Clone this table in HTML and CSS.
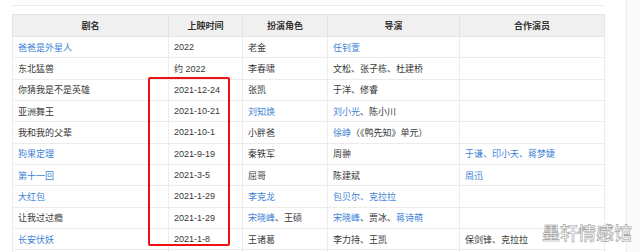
FILE: index.html
```html
<!DOCTYPE html>
<html lang="zh">
<head>
<meta charset="utf-8">
<link rel="stylesheet" href="styles.css">
</head>
<body>
<div class="page">
  <div class="main">
    <div class="rule"></div>
    <table class="films">
      <colgroup>
        <col class="c1"><col class="c2"><col class="c3"><col class="c4"><col class="c5">
      </colgroup>
      <thead>
        <tr><th>剧名</th><th>上映时间</th><th>扮演角色</th><th>导演</th><th>合作演员</th></tr>
      </thead>
      <tbody>
        <tr><td><a>爸爸是外星人</a></td><td>2022</td><td>老金</td><td><a>任钊萱</a></td><td></td></tr>
        <tr><td>东北猛兽</td><td>约 2022</td><td>李春啸</td><td>文松、张子栋、杜建桥</td><td></td></tr>
        <tr><td>你猜我是不是英雄</td><td>2021-12-24</td><td>张凯</td><td>于洋、修睿</td><td></td></tr>
        <tr><td>亚洲舞王</td><td>2021-10-21</td><td><a>刘知焕</a></td><td><a>刘小光</a>、陈小川</td><td></td></tr>
        <tr><td>我和我的父辈</td><td>2021-10-1</td><td>小胖爸</td><td><a>徐峥</a>（《鸭先知》单元）</td><td></td></tr>
        <tr><td><a>狗果定理</a></td><td>2021-9-19</td><td>秦铁军</td><td>周翀</td><td><a>于谦、印小天、蒋梦婕</a></td></tr>
        <tr><td><a>第十一回</a></td><td>2021-3-5</td><td>屈哥</td><td>陈建斌</td><td><a>周迅</a></td></tr>
        <tr><td><a>大红包</a></td><td>2021-1-29</td><td><a>李克龙</a></td><td><a>包贝尔、克拉拉</a></td><td></td></tr>
        <tr><td>让我过过瘾</td><td>2021-1-29</td><td><a>宋晓峰</a>、王硕</td><td><a>宋晓峰</a>、贾冰、<a>蒋诗萌</a></td><td></td></tr>
        <tr><td><a>长安伏妖</a></td><td>2021-1-8</td><td>王诸葛</td><td>李力持、王凯</td><td>保剑锋、克拉拉</td></tr>
        <tr><td>&nbsp;</td><td></td><td></td><td></td><td></td></tr>
      </tbody>
    </table>
    <div class="highlight"></div>
    <div class="watermark">墨轩情感馆</div>
  </div>
  <div class="side"></div>
</div>
</body>
</html>
```
FILE: styles.css
```css
html, body {
  margin: 0;
  padding: 0;
  background: #ffffff;
}
body {
  font-family: "Liberation Sans", "Noto Sans CJK SC", sans-serif;
  color: #383838;
  overflow: hidden;
  height: 252px;
}
.page {
  display: flex;
  height: 252px;
}
.main {
  position: relative;
  width: 626px;
  padding: 5px 0 0 12px;
  box-sizing: border-box;
}
.side {
  flex: 1;
  border-left: 1px solid #ececec;
  background: #fafafa;
}
.rule {
  width: 592px;
  height: 1px;
  background: #ececec;
  margin-bottom: 8px;
}
.films {
  border-collapse: collapse;
  table-layout: fixed;
  width: 592px;
  font-size: 9px;
  border: 1px solid #e6e6e6;
}
.c1 { width: 156px; }
.c2 { width: 74px; }
.c3 { width: 85px; }
.c4 { width: 132px; }
.c5 { width: 145px; }
.films th {
  background: #f0f0f0;
  font-weight: bold;
  color: #333333;
  text-align: center;
  height: 21px;
  padding: 0;
  border: 1px solid #e4e4e4;
}
.films td {
  height: 20.33px;
  padding: 0 0 0 5px;
  border: 1px solid #ececec;
  white-space: nowrap;
  overflow: hidden;
  vertical-align: middle;
}
.films a {
  color: #3d7fd6;
  text-decoration: none;
}
.highlight {
  position: absolute;
  left: 148px;
  top: 77px;
  width: 82px;
  height: 169px;
  box-sizing: border-box;
  border: 2px solid #ee1111;
  border-radius: 2px;
}
.watermark {
  position: absolute;
  left: 542px;
  top: 219px;
  font-size: 18px;
  font-weight: 500;
  font-family: "Noto Sans CJK SC", sans-serif;
  color: #ffffff;
  -webkit-text-stroke: 0.6px #9c9c9c;
  white-space: nowrap;
}
```
